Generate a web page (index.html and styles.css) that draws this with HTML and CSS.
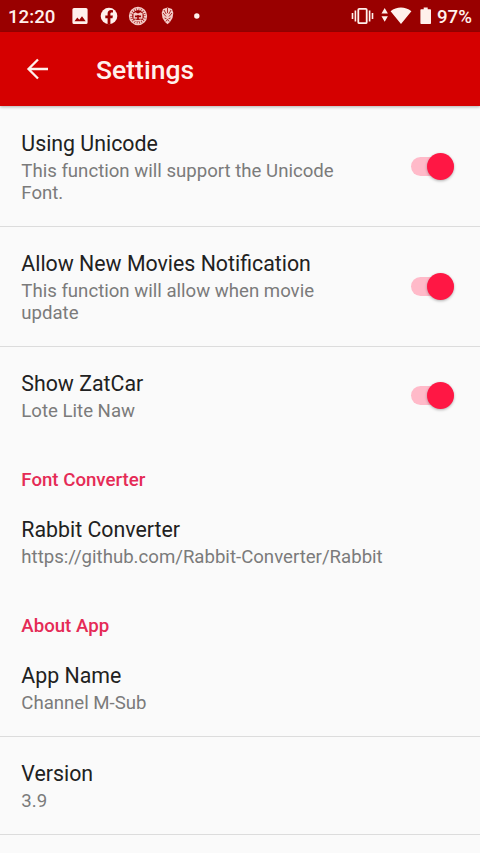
FILE: index.html
```html
<!DOCTYPE html>
<html lang="en">
<head>
<meta charset="utf-8">
<title>Settings</title>
<link rel="stylesheet" href="styles.css">
</head>
<body>
<div class="status">
  <span class="clock">12:20</span>
  <svg class="notif" width="145" height="32" viewBox="64 0 145 32">
    <path fill="#fff0ec" fill-rule="evenodd" d="M74 8h12q1.600 0 1.600 1.600v12.800q0 1.600-1.600 1.600h-12q-1.600 0-1.600-1.600v-12.800q0-1.600 1.600-1.600zM74.500 21.200h11.200l-3.700-5-2.700 3.600-2-2.300z"/>
    <circle cx="109" cy="16" r="8.300" fill="#fff0ec"/>
    <path fill="#990000" d="M107.600 24.300v-6.100h-2.300v-2.700h2.300v-1.900c0-2.400 1.400-3.600 3.500-3.600l1.900.2v2.300h-1.200c-1 0-1.400.6-1.400 1.300v1.700h2.500l-.4 2.700h-2.100v6.100z"/>
    <g fill="none" stroke="#f4cbc7">
      <circle cx="138" cy="16" r="8.500" stroke-width="1.300"/>
      <circle cx="138" cy="16" r="6.900" stroke-width="2.300" stroke-dasharray="1.800 .6"/>
      <path stroke-width="1.500" d="M133.500 14.200l2-1.200 2.500 1.500 2.500-1.500 2 1.200M137.200 14.800h-3v3.200h3M138.800 14.800h3v3.200h-3M134.500 20q3.500 1.600 7 0"/>
    </g>
    <path fill="#f4cbc7" d="M163 9l4.500-1.500L172 9l1.300 4-.8 5-2.500 4-2.500 2.200-2.500-2.200-2.500-4-.8-5z"/>
    <path fill="none" stroke="#990000" stroke-width=".8" d="M164 10l2.200 4M171 10l-2.200 4M167.500 8v5M163 13l3 3.500M172 13l-3 3.500M164.500 18l2 .8M170.500 18l-2 .8M165.800 21.500l1.700-2 1.700 2"/>
    <circle cx="196.800" cy="16" r="2.700" fill="#fff0ec"/>
  </svg>
  <svg class="system" width="84" height="32" viewBox="350 0 84 32">
    <g fill="none" stroke="#fff0ec">
      <rect x="358.300" y="8.800" width="8.400" height="14.400" rx="1" stroke-width="1.800"/>
      <path stroke-width="1.600" d="M355.400 10.500v11M352.500 13v6M369.600 10.500v11M372.500 13v6"/>
    </g>
    <path fill="#fff0ec" d="M381.500 13.600l3.200-5.600 3.200 5.600zM381.500 16.200l3.200 5.600 3.200-5.600zM390.600 11.200c6-4.800 14.600-4.800 20.800 0L401 24zM421.200 9.200h2.500V7.500h4v1.700h2.500q.8 0 .8.800v13.200q0 .8-.8.800h-9q-.8 0-.8-.8V10q0-.8.800-.8z"/>
  </svg>
  <span class="battery">97%</span>
</div>
<header class="toolbar">
  <svg width="24" height="24" viewBox="0 0 24 24"><path fill="none" stroke="#fff0ec" stroke-width="2.300" d="M23 12H3.500M13 2.500L3.500 12l9.500 9.500"/></svg>
  <h1>Settings</h1>
</header>
<main>
  <section class="row ruled">
    <div class="text"><h2>Using Unicode</h2><p>This function will support the Unicode Font.</p></div>
    <div class="switch"></div>
  </section>
  <section class="row ruled">
    <div class="text"><h2>Allow New Movies Notification</h2><p>This function will allow when movie update</p></div>
    <div class="switch"></div>
  </section>
  <section class="row">
    <div class="text"><h2>Show ZatCar</h2><p>Lote Lite Naw</p></div>
    <div class="switch"></div>
  </section>
  <h3>Font Converter</h3>
  <section class="row">
    <div class="text wide"><h2>Rabbit Converter</h2><p>https://github.com/Rabbit-Converter/Rabbit</p></div>
  </section>
  <h3>About App</h3>
  <section class="row ruled">
    <div class="text"><h2>App Name</h2><p>Channel M-Sub</p></div>
  </section>
  <section class="row ruled">
    <div class="text"><h2>Version</h2><p>3.9</p></div>
  </section>
</main>
</body>
</html>
```
FILE: styles.css
```css
* { box-sizing: border-box; }
body {
  margin: 0;
  height: 853px;
  overflow: hidden;
  background: #fafafa;
  font-family: Roboto, sans-serif;
}
h1, h2, h3, p { margin: 0; }
.status {
  display: flex;
  align-items: center;
  height: 32px;
  padding: 0 8px;
  background: #990000;
  color: #fff0ec;
  font-size: 18.67px;
  font-weight: 500;
  line-height: 32px;
}
.clock { width: 56px; padding-top: 1px; }
.system { margin-left: auto; }
.battery { width: 35px; margin-left: 3px; padding-top: 1px; white-space: nowrap; }
.toolbar {
  display: flex;
  align-items: center;
  height: 74px;
  padding-left: 25px;
  background: #d50000;
  color: #fff0ec;
  box-shadow: 0 1px 3px rgba(0, 0, 0, .3);
}
.toolbar h1 {
  margin: 1px 0 0 47px;
  font-size: 26.5px;
  line-height: 32px;
  font-weight: 500;
}
main { padding-top: 1px; }
.row {
  display: flex;
  align-items: center;
  justify-content: space-between;
  padding: 23px 26px 23px 21.300px;
}
.ruled { border-bottom: 1px solid #dcdcdc; padding-bottom: 22px; }
.text { width: 340px; }
.wide { width: 420px; }
h2 {
  font-size: 21.33px;
  line-height: 28px;
  font-weight: 400;
  color: #212121;
}
p {
  margin-top: 2px;
  font-size: 18.62px;
  line-height: 22px;
  color: #7b7b7b;
}
h3 {
  height: 48px;
  padding: 24px 21.300px 0;
  font-size: 18.67px;
  line-height: 22px;
  font-weight: 500;
  color: #e52b56;
}
.switch {
  display: flex;
  align-items: center;
  justify-content: flex-end;
  width: 43px;
  height: 19px;
  margin-bottom: 2px;
  border-radius: 10px;
  background: #ffbac9;
}
.switch::after {
  content: "";
  width: 27px;
  height: 27px;
  flex: none;
  border-radius: 50%;
  background: #ff1744;
  box-shadow: 0 1px 3px rgba(0, 0, 0, .3);
}
```
